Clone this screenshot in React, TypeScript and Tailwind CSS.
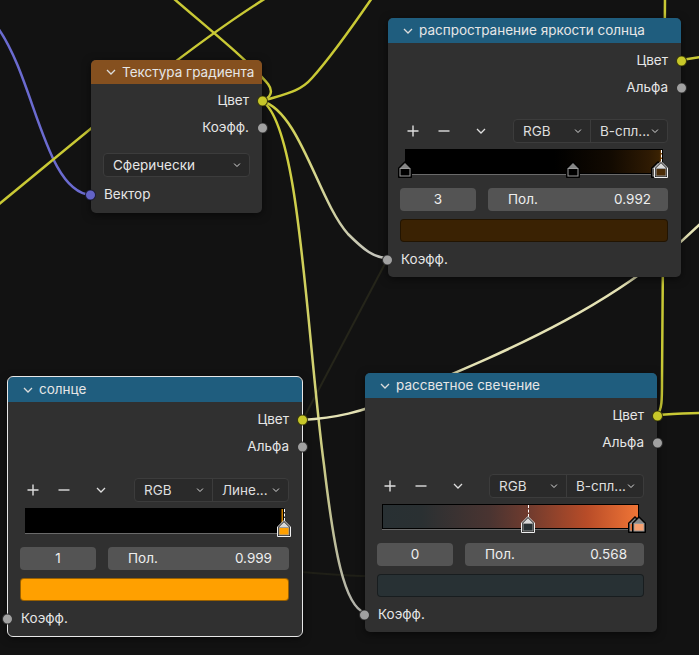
import React from 'react';

type SocketKind = 'color' | 'float' | 'vector';

const SOCKET: Record<SocketKind, string> = {
  color: 'bg-[#c7c729]',
  float: 'bg-[#a1a1a1]',
  vector: 'bg-[#6363c7]',
};

type Stop = { pos: number; fill: string; active?: boolean };

function Socket({ kind, side }: { kind: SocketKind; side: 'left' | 'right' }) {
  return (
    <span
      className={`absolute top-1/2 size-[11px] -translate-y-1/2 rounded-full border border-black/70 ${SOCKET[kind]} ${
        side === 'left' ? '-left-[6px]' : '-right-[6px]'
      }`}
    />
  );
}

function Chevron({ className = '' }: { className?: string }) {
  return (
    <svg width="10" height="6" viewBox="0 0 10 6" className={className}>
      <path d="M1 1 L5 5 L9 1" fill="none" stroke="currentColor" strokeWidth="1.3" />
    </svg>
  );
}

function OutRow({ label, kind }: { label: string; kind: SocketKind }) {
  return (
    <div className="relative flex h-[27px] items-center justify-end pr-[13px]">
      {label}
      <Socket kind={kind} side="right" />
    </div>
  );
}

function InRow({ label, kind, className = '' }: { label: string; kind: SocketKind; className?: string }) {
  return (
    <div className={`relative flex h-[27px] items-center pl-[13px] ${className}`}>
      {label}
      <Socket kind={kind} side="left" />
    </div>
  );
}

function NodeFrame({
  className,
  title,
  header,
  headerH = 'h-[25px]',
  selected,
  children,
}: {
  className: string;
  title: string;
  header: string;
  headerH?: string;
  selected?: boolean;
  children: React.ReactNode;
}) {
  return (
    <div
      className={`absolute rounded-[5px] bg-[#303030] shadow-[0_2px_8px_rgba(0,0,0,0.55)] ${
        selected ? 'outline outline-1 outline-[#e8e8e8]' : ''
      } ${className}`}
    >
      <div className={`flex items-center rounded-t-[5px] pl-[15px] text-[#e6e6e6] ${headerH} ${header}`}>
        <Chevron className="text-[#dcdcdc]" />
        <span className="ml-[6px] whitespace-nowrap">{title}</span>
      </div>
      {children}
    </div>
  );
}

function Marker({ stop }: { stop: Stop }) {
  const edge = stop.active ? '#f0f0f0' : '#000';
  return (
    <svg
      width="14"
      height="17"
      viewBox="0 0 14 17"
      className="absolute top-[12px]"
      style={{ left: `calc(${stop.pos * 100}% - 7px)` }}
    >
      <path d="M0.5 7 L7 0.5 L13.5 7 V16.5 H0.5 Z" fill="#000" stroke={edge} strokeWidth="1" />
      <path d="M2 7 L7 2 L12 7 Z" fill={stop.active ? '#d8d8d8' : '#858585'} />
      <rect x="2" y="7.5" width="10" height="7.5" fill={stop.fill} stroke="#9a9a9a" strokeWidth="1" />
    </svg>
  );
}

function Toolbar({ interp }: { interp: string }) {
  return (
    <div className="mt-[18px] flex h-[24px] items-center pl-[12px] pr-[13px] text-[#dedede]">
      <span className="flex w-[26px] justify-center">
        <svg width="12" height="12" viewBox="0 0 12 12">
          <path d="M6 0.5 V11.5 M0.5 6 H11.5" stroke="currentColor" strokeWidth="1.4" />
        </svg>
      </span>
      <span className="ml-[5px] flex w-[26px] justify-center">
        <svg width="12" height="12" viewBox="0 0 12 12">
          <path d="M0.5 6 H11.5" stroke="currentColor" strokeWidth="1.4" />
        </svg>
      </span>
      <span className="ml-[11px] flex w-[26px] justify-center">
        <Chevron />
      </span>
      <div className="ml-auto flex h-[24px] w-[155px] rounded-[4px] border border-[#3c3c3c] bg-[#2a2a2a]">
        <div className="flex w-[78px] items-center justify-between border-r border-[#3c3c3c] pl-[9px] pr-[7px]">
          <span>RGB</span>
          <Chevron className="scale-75" />
        </div>
        <div className="flex flex-1 items-center justify-between pl-[9px] pr-[7px]">
          <span className="whitespace-nowrap">{interp}</span>
          <Chevron className="scale-75" />
        </div>
      </div>
    </div>
  );
}

function RampNode({
  className,
  title,
  interp,
  rampBg,
  stops,
  dashAt,
  index,
  pos,
  swatch,
  selected,
}: {
  className: string;
  title: string;
  interp: string;
  rampBg: string;
  stops: Stop[];
  dashAt: number;
  index: string;
  pos: string;
  swatch: string;
  selected?: boolean;
}) {
  return (
    <NodeFrame className={className} title={title} header="bg-[#1f5d7e]" selected={selected}>
      <div className="pt-[4px]">
        <OutRow label="Цвет" kind="color" />
        <OutRow label="Альфа" kind="float" />
      </div>
      <Toolbar interp={interp} />
      <div className="relative ml-[17px] mr-[18px] mt-[6px] h-[26px]">
        <div className={`h-[25px] border border-black ${rampBg}`} />
        <div className="h-px bg-[#6a6a6a]" />
        <div
          className="absolute top-[1px] h-[12px] border-l border-dashed border-white"
          style={{ left: `${dashAt * 100}%` }}
        />
        {stops.map((s, i) => (
          <Marker key={i} stop={s} />
        ))}
      </div>
      <div className="mt-[13px] flex h-[23px] gap-[12px] pl-[12px] pr-[13px] text-[#eeeeee]">
        <div className="flex w-[76px] items-center justify-center rounded-[4px] bg-[#545454]">{index}</div>
        <div className="flex flex-1 items-center justify-between rounded-[4px] bg-[#545454] pl-[20px] pr-[17px]">
          <span>Пол.</span>
          <span>{pos}</span>
        </div>
      </div>
      <div className={`ml-[12px] mr-[13px] mt-[8px] h-[23px] rounded-[4px] border border-black/40 ${swatch}`} />
      <InRow label="Коэфф." kind="float" className="mt-[4px]" />
      <div className="h-[4px]" />
    </NodeFrame>
  );
}

function Wires() {
  return (
    <svg width="699" height="655" viewBox="0 0 699 655" className="absolute inset-0" fill="none">
      <defs>
        <linearGradient id="toRass" gradientUnits="userSpaceOnUse" x1="262" y1="101" x2="365" y2="613">
          <stop offset="0" stopColor="#cdcd34" />
          <stop offset="0.6" stopColor="#d2d27a" />
          <stop offset="1" stopColor="#b2b2ae" />
        </linearGradient>
        <linearGradient id="toRasp" gradientUnits="userSpaceOnUse" x1="262" y1="101" x2="388" y2="258">
          <stop offset="0" stopColor="#cdcd34" />
          <stop offset="0.45" stopColor="#d6d690" />
          <stop offset="1" stopColor="#c4c4c0" />
        </linearGradient>
      </defs>
      {/* faint muted links */}
      <path d="M388 258 L300 425" stroke="#25251a" strokeWidth="2" />
      <path d="M300 572 C330 574, 345 576, 370 576" stroke="#1f1f17" strokeWidth="2" />
      {/* vector link */}
      <path d="M-2 28 C35 80, 45 192, 91 195" stroke="#6b6bd0" strokeWidth="2.5" />
      {/* yellow links */}
      <path d="M-2 205 C80 138, 180 52, 266 -2" stroke="#c9c935" strokeWidth="2.5" />
      <path d="M173 -2 C210 30, 250 62, 268 84 C274 92, 270 98, 262 101" stroke="#c9c935" strokeWidth="2.5" />
      <path d="M262 101 C285 94, 300 92, 312 78 C330 58, 350 30, 372 -2" stroke="#c9c935" strokeWidth="2.5" />
      <path d="M262 101 C300 125, 306 330, 324 465 C334 550, 344 606, 365 613" stroke="url(#toRass)" strokeWidth="2.5" />
      <path d="M262 101 C300 112, 318 200, 348 234 C364 250, 374 258, 388 258" stroke="url(#toRasp)" strokeWidth="2.5" />
      <path d="M302 420 C335 418, 360 413, 400 396 C500 354, 620 306, 706 218" stroke="#e4e2b4" strokeWidth="2.5" />
      <path d="M657 415 C662 410, 662 400, 662 380 L665 -2" stroke="#c9c935" strokeWidth="2.5" />
      <path d="M657 415 C672 414, 685 413, 701 413" stroke="#c9c935" strokeWidth="2.5" />
      <path d="M681 60 C688 59, 694 58, 701 57" stroke="#c9c935" strokeWidth="2.5" />
    </svg>
  );
}

export default function App() {
  return (
    <div className="relative h-[655px] w-[699px] overflow-hidden bg-[#121212] font-['Inter',sans-serif] text-[13.5px] text-[#e6e6e6]">
      <Wires />

      <NodeFrame
        className="left-[91px] top-[60px] w-[171px]"
        title="Текстура градиента"
        header="bg-[#85501f]"
        headerH="h-[24px]"
      >
        <div className="pt-[3px]">
          <OutRow label="Цвет" kind="color" />
          <OutRow label="Коэфф." kind="float" />
        </div>
        <div className="mx-[12px] mt-[12px] flex h-[24px] items-center justify-between rounded-[4px] border border-[#3c3c3c] bg-[#282828] pl-[9px] pr-[7px]">
          <span>Сферически</span>
          <Chevron className="scale-75 text-[#dedede]" />
        </div>
        <InRow label="Вектор" kind="vector" className="mt-[4px]" />
        <div className="h-[5px]" />
      </NodeFrame>

      <RampNode
        className="left-[388px] top-[18px] w-[293px]"
        title="распространение яркости солнца"
        interp="В-спл..."
        rampBg="bg-[linear-gradient(to_right,#000_0%,#000_58%,#120a01_80%,#2e1a03_95%,#3a2203_99%,#a05a10_100%)]"
        stops={[
          { pos: 0, fill: '#000' },
          { pos: 0.65, fill: '#000' },
          { pos: 0.98, fill: '#1a1002' },
          { pos: 0.992, fill: '#4a2c08', active: true },
        ]}
        dashAt={0.992}
        index="3"
        pos="0.992"
        swatch="bg-[#3a2203]"
      />

      <RampNode
        className="left-[8px] top-[377px] w-[294px]"
        title="солнце"
        interp="Лине..."
        rampBg="bg-[linear-gradient(to_right,#000_0%,#000_99%,#ffa000_100%)]"
        stops={[{ pos: 0.999, fill: '#ffa000', active: true }]}
        dashAt={0.999}
        index="1"
        pos="0.999"
        swatch="bg-[#ffa000]"
        selected
      />

      <RampNode
        className="left-[365px] top-[373px] w-[292px]"
        title="рассветное свечение"
        interp="В-спл..."
        rampBg="bg-[linear-gradient(to_right,#283033_0%,#2a3032_15%,#4a3431_42%,#703b2e_57%,#b84c28_80%,#f07536_100%)]"
        stops={[
          { pos: 0.568, fill: '#283033', active: true },
          { pos: 0.985, fill: '#e86a2a' },
          { pos: 1, fill: '#f7a070' },
        ]}
        dashAt={0.568}
        index="0"
        pos="0.568"
        swatch="bg-[#283134]"
      />
    </div>
  );
}
